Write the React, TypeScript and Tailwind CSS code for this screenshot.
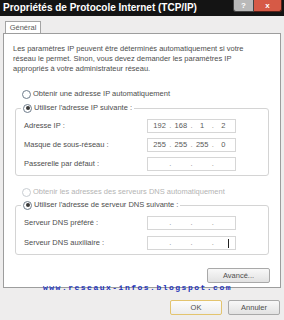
import React from 'react';

const IP_ROWS = [
  { label: 'Adresse IP :', value: ['192', '168', '1', '2'] },
  { label: 'Masque de sous-réseau :', value: ['255', '255', '255', '0'] },
  { label: 'Passerelle par défaut :', value: ['', '', '', ''] },
];

const DNS_ROWS = [
  { label: 'Serveur DNS préféré :', value: ['', '', '', ''] },
  { label: 'Serveur DNS auxiliaire :', value: ['', '', '', ''], caret: true },
];

function Radio({ checked, disabled }: { checked?: boolean; disabled?: boolean }) {
  return (
    <span
      className={`inline-flex h-[9px] w-[9px] shrink-0 items-center justify-center rounded-full border bg-white ${
        disabled ? 'border-[#c8cdd2]' : 'border-[#6f7d8c]'
      }`}
    >
      {checked && <span className="h-[4px] w-[4px] rounded-full bg-[#3a3a3a]" />}
    </span>
  );
}

function IpBox({ parts, caret }: { parts: string[]; caret?: boolean }) {
  return (
    <div className="flex h-[14px] w-[89px] items-center border border-[#d6d6d6] bg-white px-[2px] text-[#5a5a5a]">
      {parts.map((p, i) => (
        <React.Fragment key={i}>
          <span className="flex-1 text-center">{p}</span>
          {i < 3 && <span className="text-[#8a8a8a]">.</span>}
        </React.Fragment>
      ))}
      {caret && <span className="absolute ml-[78px] h-[9px] w-px bg-[#222]" />}
    </div>
  );
}

function Row({ label, parts, caret }: { label: string; parts: string[]; caret?: boolean }) {
  return (
    <div className="flex h-[14px] items-center justify-between pl-[8px] pr-[32px]">
      <span>{label}</span>
      <div className="relative flex items-center">
        <IpBox parts={parts} caret={caret} />
      </div>
    </div>
  );
}

export default function App() {
  return (
    <div className="relative flex h-[320px] w-[284px] flex-col overflow-hidden bg-[#eeeded] font-['Liberation_Sans',Arial,sans-serif] text-[7.5px] text-[#4e4e4e]">
      {/* title bar */}
      <div className="flex h-[16px] items-start justify-between bg-[#141414] pl-[3px]">
        <span className="mt-[2px] text-[10px] font-bold leading-[12px] text-white">
          Propriétés de Protocole Internet (TCP/IP)
        </span>
        <div className="mr-[2px] flex">
          <div className="flex h-[12px] w-[21px] items-center justify-center rounded-bl-[3px] border border-t-0 border-[#444] bg-[#b9b9b9] text-[8px] font-bold leading-none text-white">
            ?
          </div>
          <div className="flex h-[12px] w-[28px] items-center justify-center rounded-br-[3px] border border-l-0 border-t-0 border-[#5a2018] bg-[#d65a46] text-[8px] font-bold leading-none text-white">
            x
          </div>
        </div>
      </div>

      {/* tab */}
      <div className="flex pl-[5px] pt-[5px]">
        <div className="-mb-px flex h-[13px] w-[36px] items-center justify-center border border-b-0 border-[#a4a4a4] bg-white text-[#5a5a5a]">
          Général
        </div>
      </div>

      {/* panel */}
      <div className="mx-[3px] flex h-[255px] flex-col border border-[#9d9d9d] bg-white">
        <p className="mt-[10px] px-[9px] leading-[10px]">
          Les paramètres IP peuvent être déterminés automatiquement si votre
          <br />
          réseau le permet. Sinon, vous devez demander les paramètres IP
          <br />
          appropriés à votre administrateur réseau.
        </p>

        <label className="ml-[18px] mt-[15px] flex h-[10px] items-center gap-[2px]">
          <Radio />
          <span>Obtenir une adresse IP automatiquement</span>
        </label>

        <fieldset className="mx-[11px] mt-[4px] rounded-[3px] border border-[#d4d4d4] pb-[4px]">
          <legend className="ml-[5px] flex h-[10px] items-center gap-[2px] px-[2px]">
            <Radio checked />
            <span>Utiliser l'adresse IP suivante :</span>
          </legend>
          <div className="mt-[6px] flex flex-col gap-[5px]">
            {IP_ROWS.map((r) => (
              <Row key={r.label} label={r.label} parts={r.value} />
            ))}
          </div>
        </fieldset>

        <label className="ml-[18px] mt-[11px] flex h-[10px] items-center gap-[2px] text-[#b4b4b4]">
          <Radio disabled />
          <span>Obtenir les adresses des serveurs DNS automatiquement</span>
        </label>

        <fieldset className="mx-[11px] mt-[3px] rounded-[3px] border border-[#d4d4d4] pb-[4px]">
          <legend className="ml-[5px] flex h-[10px] items-center gap-[2px] px-[2px]">
            <Radio checked />
            <span>Utiliser l'adresse de serveur DNS suivante :</span>
          </legend>
          <div className="mt-[6px] flex flex-col gap-[6px]">
            {DNS_ROWS.map((r) => (
              <Row key={r.label} label={r.label} parts={r.value} caret={r.caret} />
            ))}
          </div>
        </fieldset>

        <div className="mr-[10px] mt-[13px] flex justify-end">
          <button className="h-[15px] w-[63px] rounded-[2px] border border-[#a9a9a9] bg-linear-to-b from-[#f8f8f8] to-[#e2e2e2] text-[7.5px] text-[#4e4e4e]">
            Avancé...
          </button>
        </div>
      </div>

      {/* buttons */}
      <div className="mr-[4px] mt-[12px] flex justify-end gap-[6px]">
        <button className="h-[15px] w-[52px] rounded-[2px] border border-[#e3c46e] bg-linear-to-b from-[#fcfcfc] to-[#ececec] text-[7.5px] text-[#4e4e4e]">
          OK
        </button>
        <button className="h-[15px] w-[52px] rounded-[2px] border border-[#a9a9a9] bg-linear-to-b from-[#f8f8f8] to-[#e2e2e2] text-[7.5px] text-[#4e4e4e]">
          Annuler
        </button>
      </div>

      {/* blog watermark */}
      <span className="absolute left-[43px] top-[282px] font-['Liberation_Mono',monospace] text-[8px] font-bold tracking-[1.5px] text-[#2233b8]">
        www.reseaux-infos.blogspot.com
      </span>
    </div>
  );
}
